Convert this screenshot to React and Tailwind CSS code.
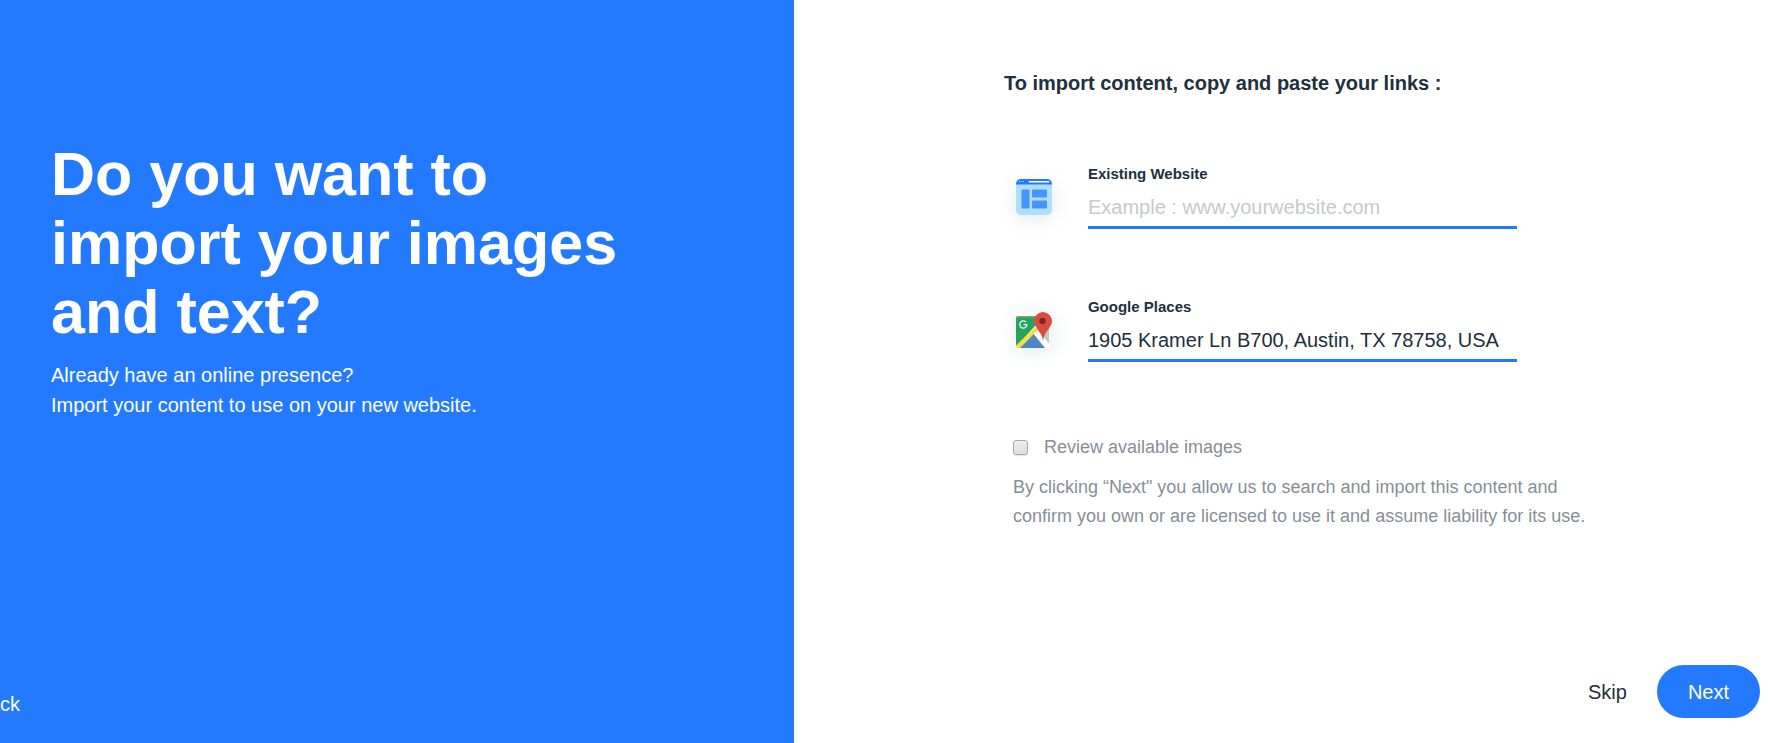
import React, { useState } from "react";

const WebsiteIcon = () => (
  <svg width="36" height="36" viewBox="0 0 36 36" aria-hidden="true">
    <rect width="36" height="36" rx="5" fill="#b0defd" />
    <path d="M0 5.500V5a5 5 0 0 1 5-5h26a5 5 0 0 1 5 5v.5z" fill="#237aff" />
    <path d="M3 2h1v1H3zM5 2h1v1H5zM7 2h1v1H7z" fill="#b0defd" />
    <rect x="12.500" y="2" width="21" height="1.500" rx=".7" fill="#fff" />
    <rect x="5.500" y="10.500" width="8" height="19" rx="1" fill="#4694ff" />
    <rect x="16" y="10.500" width="15" height="8" rx="1" fill="#4694ff" />
    <rect x="16" y="21.500" width="15" height="8" rx="1" fill="#4694ff" />
  </svg>
);

const MapsIcon = () => (
  <svg width="36" height="36" viewBox="0 0 36 36" aria-hidden="true">
    <defs>
      <clipPath id="map">
        <rect y="4" width="36" height="32" rx="2.500" />
      </clipPath>
    </defs>
    <rect width="36" height="36" rx="5" fill="#fff" />
    <g clipPath="url(#map)">
      <path d="M0 4h28L0 35z" fill="#26a35f" />
      <path d="M0 4h22v1.500H0z" fill="#8f9a72" />
      <path d="M20 17l13 17V12z" fill="#c4c5c8" />
      <path d="M33 8h3v28h-3z" fill="#f6f6f6" />
      <path d="M2 37l16-16 15 16z" fill="#4f86c6" />
      <path d="M16.500 20.500l3.500-4 14 16v3.500h-5z" fill="#fff" />
      <path d="M0 33.500L19.500 15l2.500 3L3.500 36.500H0z" fill="#fadb41" />
    </g>
    <path
      d="M10 10.100A3.600 3.600 0 1 0 10.900 12.700H7.500"
      fill="none"
      stroke="#e9f3ec"
      strokeWidth="1.300"
    />
    <path
      d="M27 0a9 9 0 0 0-9 9c0 7 7.500 9.500 9 19.500C28.500 18.500 36 16 36 9a9 9 0 0 0-9-9z"
      fill="#dd4b3e"
    />
    <circle cx="26.500" cy="9" r="3.200" fill="#7f2620" />
  </svg>
);

const LinkField = ({ id, label, icon, ...inputProps }) => {
  return (
    <div className="flex items-center gap-9 pl-3">
      <div className="size-9 shrink-0 rounded-md shadow-[0_4px_20px_rgba(32,80,140,0.12)]">
        {icon}
      </div>
      <div className="w-full max-w-[429px]">
        <label htmlFor={id} className="block text-[15px] leading-5 font-bold">
          {label}
        </label>
        <input
          id={id}
          type="text"
          className="mt-2 block h-[37px] w-full border-b-3 border-[#237aff] pb-1 text-xl outline-none placeholder:text-[#c5cacd]"
          {...inputProps}
        />
      </div>
    </div>
  );
};

const App = () => {
  const [website, setWebsite] = useState("");
  const [place, setPlace] = useState("1905 Kramer Ln B700, Austin, TX 78758, USA");
  const [review, setReview] = useState(false);

  return (
    <main className="flex min-h-screen bg-white font-['Liberation_Sans',Arial,sans-serif] text-[#20303c]">
      <section className="flex w-[44.83%] shrink-0 flex-col overflow-hidden bg-[#237aff] pt-[140px] pb-6 text-white">
        <div className="px-[51px]">
          <h1 className="max-w-[600px] text-[61px] leading-[69px] font-bold">
            Do you want to import your images and text?
          </h1>
          <p className="mt-[13px] text-xl leading-[30px]">
            Already have an online presence?
            <br />
            Import your content to use on your new website.
          </p>
        </div>
        <button
          type="button"
          className="mt-auto flex w-5 justify-end text-xl leading-[30px] font-medium"
        >
          Back
        </button>
      </section>

      <section className="flex grow flex-col pt-[68px] pr-[11px] pb-[25px]">
        <form className="flex grow flex-col">
          <div className="max-w-[820px] pl-[210px]">
            <h2 className="text-xl leading-[30px] font-bold">
              To import content, copy and paste your links :
            </h2>

            <div className="mt-[66px] flex flex-col gap-[68px]">
              <LinkField
                id="website"
                label="Existing Website"
                icon={<WebsiteIcon />}
                placeholder="Example : www.yourwebsite.com"
                value={website}
                onChange={(e) => setWebsite(e.target.value)}
              />
              <LinkField
                id="places"
                label="Google Places"
                icon={<MapsIcon />}
                value={place}
                onChange={(e) => setPlace(e.target.value)}
              />
            </div>

            <div className="mt-[71px] pl-[9px] text-lg leading-[29px] text-[#868f98]">
              <div className="flex items-center gap-4">
                <input
                  id="review"
                  type="checkbox"
                  checked={review}
                  onChange={(e) => setReview(e.target.checked)}
                  className="size-[15px] appearance-none rounded-[3px] border border-[#a9a9a9] bg-linear-to-b from-[#eeeeee] to-[#dcdcdc] shadow-[0_1px_1px_rgba(0,0,0,0.12)] checked:bg-[#237aff]"
                />
                <label htmlFor="review">Review available images</label>
              </div>
              <p className="mt-[11px]">
                By clicking “Next" you allow us to search and import this content
                and confirm you own or are licensed to use it and assume liability
                for its use.
              </p>
            </div>
          </div>

          <div className="mt-auto flex items-center justify-end gap-[30px] text-xl">
            <button type="button">Skip</button>
            <button
              type="button"
              className="h-[53px] rounded-full bg-[#237aff] px-[31px] text-white"
            >
              Next
            </button>
          </div>
        </form>
      </section>
    </main>
  );
};

export default App;
